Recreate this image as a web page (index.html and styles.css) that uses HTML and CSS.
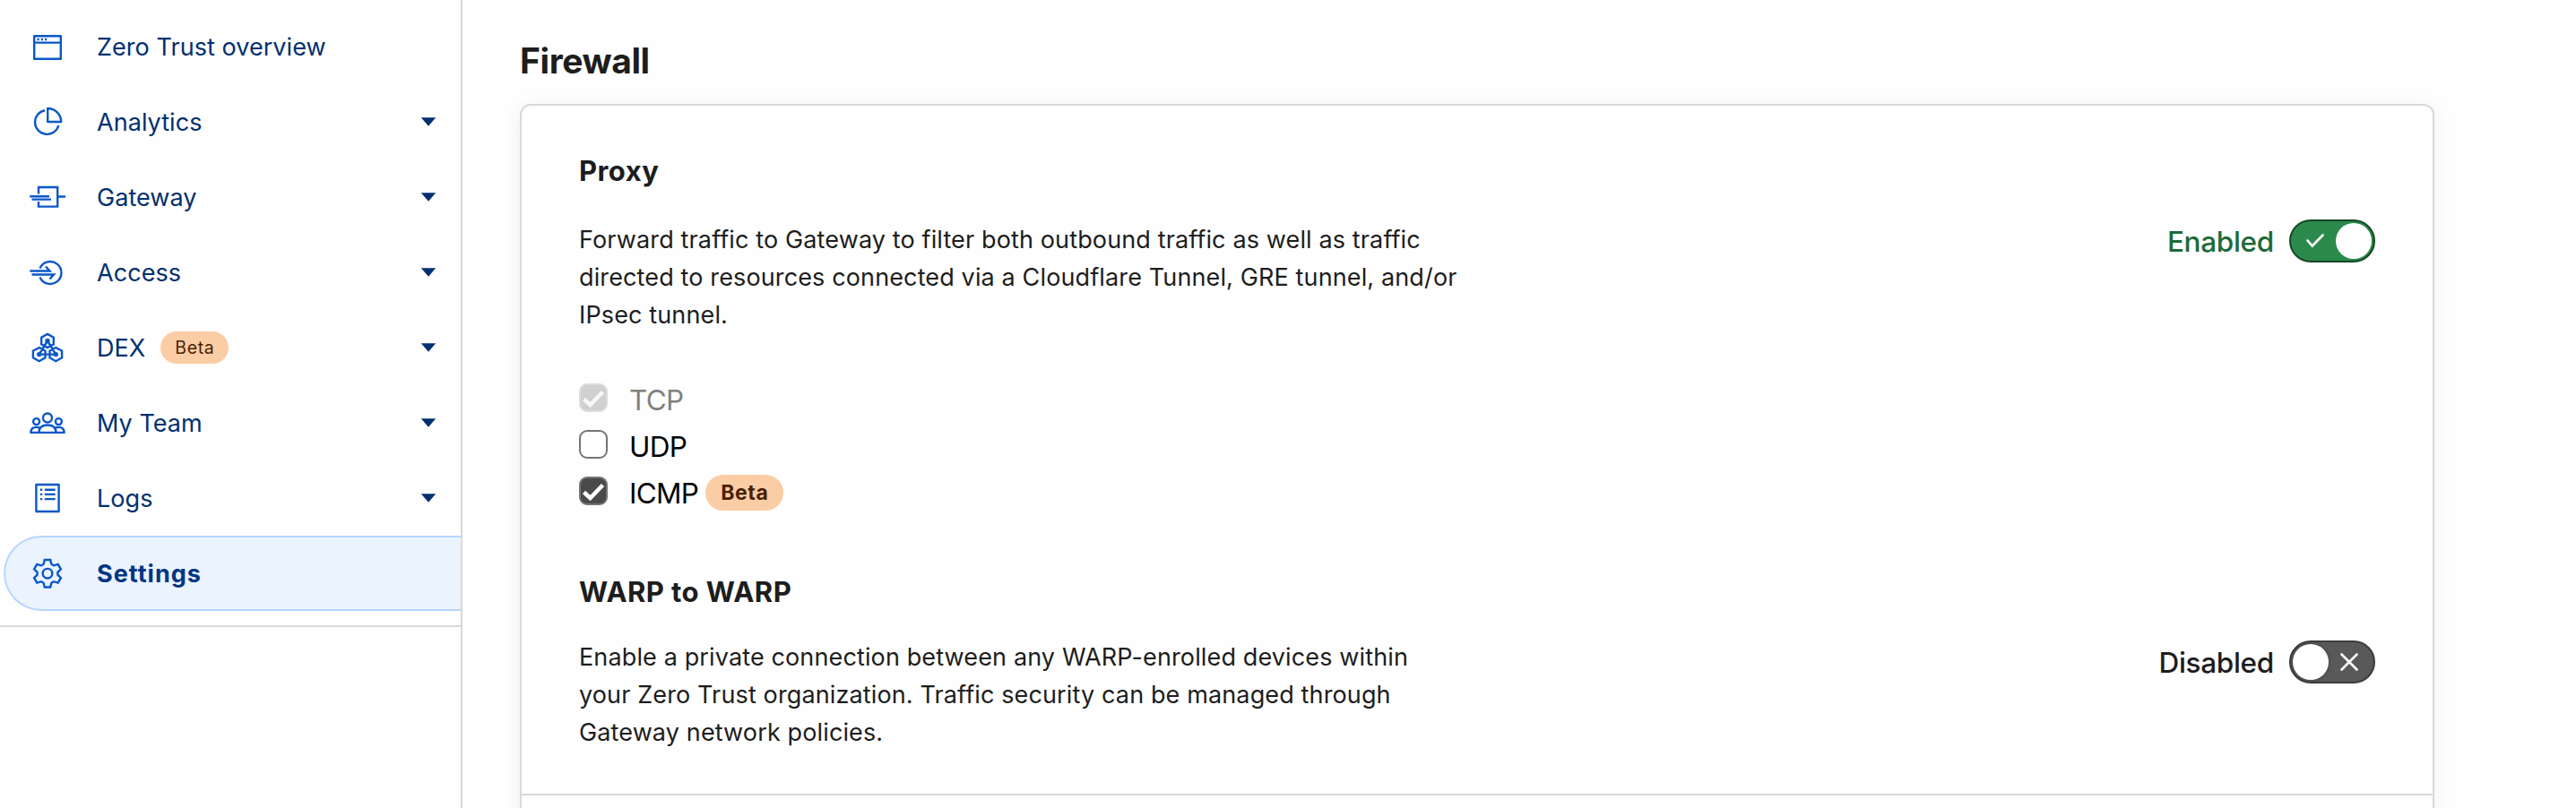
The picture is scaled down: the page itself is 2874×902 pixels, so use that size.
FILE: index.html
```html
<!DOCTYPE html>
<html lang="en">
<head>
<meta charset="utf-8">
<title>Zero Trust Settings</title>
<link rel="stylesheet" href="styles.css">
</head>
<body>
<div class="app">
  <nav class="sidebar">
    <ul class="nav">
      <li class="nav-item">
        <svg class="icon" viewBox="0 0 40 40"><path d="M5.2 8.2h29.6v25.6H5.2zM5.2 15.6h29.6" stroke-linejoin="round"/><path d="M8.500 12h2.200M12.700 12h2.200M16.900 12h2.200"/></svg>
        <span class="nav-label">Zero Trust overview</span>
      </li>
      <li class="nav-item">
        <svg class="icon" viewBox="0 0 40 40"><path d="M17 7.3A13.4 13.4 0 1 0 32.4 24"/><path d="M20.2 5v15h15A15 15 0 0 0 20.2 5z" stroke-linejoin="round"/></svg>
        <span class="nav-label">Analytics</span>
        <svg class="caret" viewBox="0 0 18 10"><path d="M.8 .3h16.400L9 9.700z"/></svg>
      </li>
      <li class="nav-item">
        <svg class="icon" viewBox="0 0 40 40"><path d="M10 16.500V9h21.200v21.600H10V25M31.200 19.500H40M0.300 19.200H22M2.500 22.600H24"/></svg>
        <span class="nav-label">Gateway</span>
        <svg class="caret" viewBox="0 0 18 10"><path d="M.8 .3h16.400L9 9.700z"/></svg>
      </li>
      <li class="nav-item">
        <svg class="icon" viewBox="0 0 40 40"><path d="M11.500 15.500A12.500 12.500 0 1 1 11.500 25.500M0.300 18.500H22.500l-4.500-5M2.500 22.500H27l-4.500 5"/></svg>
        <span class="nav-label">Access</span>
        <svg class="caret" viewBox="0 0 18 10"><path d="M.8 .3h16.400L9 9.700z"/></svg>
      </li>
      <li class="nav-item">
        <svg class="icon" viewBox="0 0 40 40"><path d="M20 4.900l6.800 3.800v7.600L20 20.100l-6.800-3.800v-7.600zM10.700 20l6.800 3.800v7.500l-6.800 3.900-6.800-3.900v-7.500zM29.300 20l6.800 3.800v7.500l-6.800 3.900-6.800-3.900v-7.500zM20 12.500L10.700 27.600h18.600z"/><g class="solid"><circle cx="20" cy="12.500" r="2.700"/><circle cx="10.700" cy="27.600" r="2.700"/><circle cx="29.300" cy="27.600" r="2.700"/></g></svg>
        <span class="nav-label">DEX</span>
        <span class="badge badge-nav">Beta</span>
        <svg class="caret" viewBox="0 0 18 10"><path d="M.8 .3h16.400L9 9.700z"/></svg>
      </li>
      <li class="nav-item">
        <svg class="icon" viewBox="0 0 40 40"><circle cx="20" cy="14.500" r="5"/><circle cx="7.600" cy="18.600" r="3.500"/><circle cx="32.400" cy="18.600" r="3.500"/><path d="M10.500 30.900c0-6 4-8.400 9.500-8.400s9.500 2.400 9.500 8.400zM10.500 30.900H1.400c0-4.800 3-6 6.200-6 1.800 0 3.300.2 4.400 1.100M29.500 30.900h9.100c0-4.800-3-6-6.200-6-1.800 0-3.300.2-4.400 1.100" stroke-linejoin="round"/></svg>
        <span class="nav-label">My Team</span>
        <svg class="caret" viewBox="0 0 18 10"><path d="M.8 .3h16.400L9 9.700z"/></svg>
      </li>
      <li class="nav-item">
        <svg class="icon" viewBox="0 0 40 40"><path d="M7.400 5h25.200v30H7.400z" stroke-linejoin="round"/><path d="M11.800 10.700h2.400M16.800 10.700h11.900M11.800 15.900h2.400M16.800 15.900h11.900M11.800 21.100h2.400M16.800 21.100h11.900"/></svg>
        <span class="nav-label">Logs</span>
        <svg class="caret" viewBox="0 0 18 10"><path d="M.8 .3h16.400L9 9.700z"/></svg>
      </li>
      <li class="nav-item active">
        <svg class="icon" viewBox="0 0 40 40"><path d="M16.800 5h6.400l1.200 4.800 2.600 1.500 4.700-1.400 3.200 5.500-3.500 3.400v2.900l3.500 3.400-3.200 5.500-4.700-1.400-2.600 1.500-1.200 4.800h-6.400l-1.200-4.800-2.600-1.500-4.700 1.400-3.200-5.500 3.500-3.400v-2.900l-3.500-3.400 3.200-5.500 4.700 1.400 2.600-1.500z"/><circle cx="20" cy="20.200" r="5.300"/></svg>
        <span class="nav-label">Settings</span>
      </li>
    </ul>
  </nav>

  <main class="content">
    <h1 class="title">Firewall</h1>
    <div class="card">
      <section class="setting">
        <div class="setting-body">
          <h2 class="setting-title">Proxy</h2>
          <p class="description">Forward traffic to Gateway to filter both outbound traffic as well as traffic<br>directed to resources connected via a Cloudflare Tunnel, GRE tunnel, and/or<br>IPsec tunnel.</p>
          <div class="checks">
            <div class="check disabled">
              <span class="box checked"><svg viewBox="0 0 32 32"><path d="M5.500 17.500l7 6.500L26.500 9.500"/></svg></span>
              <span class="check-label">TCP</span>
            </div>
            <div class="check">
              <span class="box"></span>
              <span class="check-label">UDP</span>
            </div>
            <div class="check">
              <span class="box checked"><svg viewBox="0 0 32 32"><path d="M5.500 17.500l7 6.500L26.500 9.500"/></svg></span>
              <span class="check-label">ICMP</span>
              <span class="badge badge-check">Beta</span>
            </div>
          </div>
        </div>
        <div class="control on">
          <span class="control-label">Enabled</span>
          <span class="toggle"><svg class="mark" viewBox="0 0 20 20"><path d="M1.500 9.500l5.300 6L18.500 3.500"/></svg><span class="knob"></span></span>
        </div>
      </section>
      <section class="setting second">
        <div class="setting-body">
          <h2 class="setting-title">WARP to WARP</h2>
          <p class="description">Enable a private connection between any WARP-enrolled devices within<br>your Zero Trust organization. Traffic security can be managed through<br>Gateway network policies.</p>
        </div>
        <div class="control off">
          <span class="control-label">Disabled</span>
          <span class="toggle"><span class="knob"></span><svg class="mark" viewBox="0 0 20 20"><path d="M1.500 1.500l17 17M18.500 1.500l-17 17"/></svg></span>
        </div>
      </section>
    </div>
  </main>
</div>
</body>
</html>
```
FILE: styles.css
```css
* { box-sizing: border-box; }

body {
  margin: 0;
  background: #fefefe;
  color: #1d1d1d;
  font-family: Inter, "Liberation Sans", sans-serif;
  font-size: 27px;
}

h1, h2, p, ul { margin: 0; padding: 0; }

.app { display: flex; height: 902px; overflow: hidden; }

/* Sidebar */
.sidebar { width: 516px; flex: none; border-right: 2px solid #d9d9d9; }

.nav {
  list-style: none;
  padding: 10px 0 16px;
  border-bottom: 2px solid #d9d9d9;
}

.nav-item {
  display: flex;
  align-items: center;
  height: 84px;
  padding: 0 27px 0 33px;
  color: #003070;
}

.nav-item.active {
  margin-left: 4px;
  padding-left: 27px;
  border: 2px solid #b6d6ff;
  border-right: 0;
  border-radius: 42px 0 0 42px;
  background: #ebf3ff;
  color: #003682;
  font-weight: 700;
}

.icon {
  width: 40px;
  height: 40px;
  flex: none;
  margin-right: 35px;
  fill: none;
  stroke: #0a57c9;
  stroke-width: 2.4;
}

.icon .solid { fill: #0a57c9; stroke: none; }

.nav-label { padding-top: 2px; line-height: 42px; letter-spacing: 0.05px; }
.active .nav-label { letter-spacing: 1px; }

.caret { width: 18px; height: 10px; margin-left: auto; fill: #003070; }

.badge {
  display: flex;
  align-items: center;
  justify-content: center;
  flex: none;
  background: #fbcda5;
  color: #4a1f04;
}

.badge-nav {
  width: 76px;
  height: 36px;
  margin-left: 17px;
  border-radius: 18px;
  font-size: 19.5px;
  letter-spacing: 0.6px;
}

/* Content */
.content { width: 2136px; margin-left: 64px; }

.title {
  height: 116px;
  padding-top: 43px;
  font-size: 39px;
  line-height: 50px;
  font-weight: 700;
  letter-spacing: -0.4px;
}

.card {
  height: 900px;
  border: 2px solid #d9d9d9;
  border-radius: 12px;
  box-shadow: 0 4px 24px rgba(0, 0, 0, 0.06);
  background: #fefefe;
}

.setting {
  display: flex;
  justify-content: space-between;
  height: 470px;
  padding: 52px 64px 0;
}

.setting.second { height: 300px; border-bottom: 2px solid #d9d9d9; }

.setting-title { font-size: 31px; line-height: 42px; font-weight: 700; letter-spacing: 0.45px; }

.description { margin-top: 35px; line-height: 42px; letter-spacing: 0.13px; white-space: nowrap; }

.second .description { margin-top: 31px; }

.checks { margin-top: 55px; }

.check {
  display: flex;
  height: 52px;
  color: #000;
  font-size: 31.5px;
  line-height: 38px;
}

.check-label { letter-spacing: -0.7px; }

.box {
  width: 32px;
  height: 32px;
  margin-right: 24px;
  border: 2px solid #757575;
  border-radius: 9px;
  background: #fff;
}

.box svg { display: block; width: 32px; height: 32px; margin: -2px; fill: none; stroke: #fff; stroke-width: 4.600; }

.box.checked { background: #4a4a4a; }

.disabled { color: #808080; }
.disabled .box { border-color: #dcdcdc; background: #d0d0d0; }
.disabled .box svg { stroke: #f6f6f6; }

.badge-check {
  width: 87px;
  height: 40px;
  margin: -2px 0 0 8px;
  border-radius: 20px;
  font-size: 23px;
  font-weight: 700;
  letter-spacing: 0.6px;
}

/* Switches */
.control {
  display: flex;
  align-items: center;
  height: 48px;
  margin-top: 75px;
  font-size: 31.5px;
  font-weight: 500;
}

.control-label { letter-spacing: -0.3px; }

.on .control-label { color: #1d6a39; }

.toggle {
  display: flex;
  align-items: center;
  justify-content: space-between;
  width: 96px;
  height: 48px;
  margin-left: 17px;
  padding: 0 2px;
  border: 2px solid #3d3d3d;
  border-radius: 24px;
  background: #595959;
}

.on .toggle { border-color: #154724; background: #2b8a4b; padding-left: 17px; }
.off .toggle { padding-right: 17px; }

.knob { width: 40px; height: 40px; border-radius: 50%; background: #fff; box-shadow: 0 0 5px rgba(0, 0, 0, 0.3); }
.on .knob { box-shadow: none; }

.mark { width: 20px; height: 20px; fill: none; stroke: #fff; stroke-width: 2.600; stroke-linecap: round; }
```
